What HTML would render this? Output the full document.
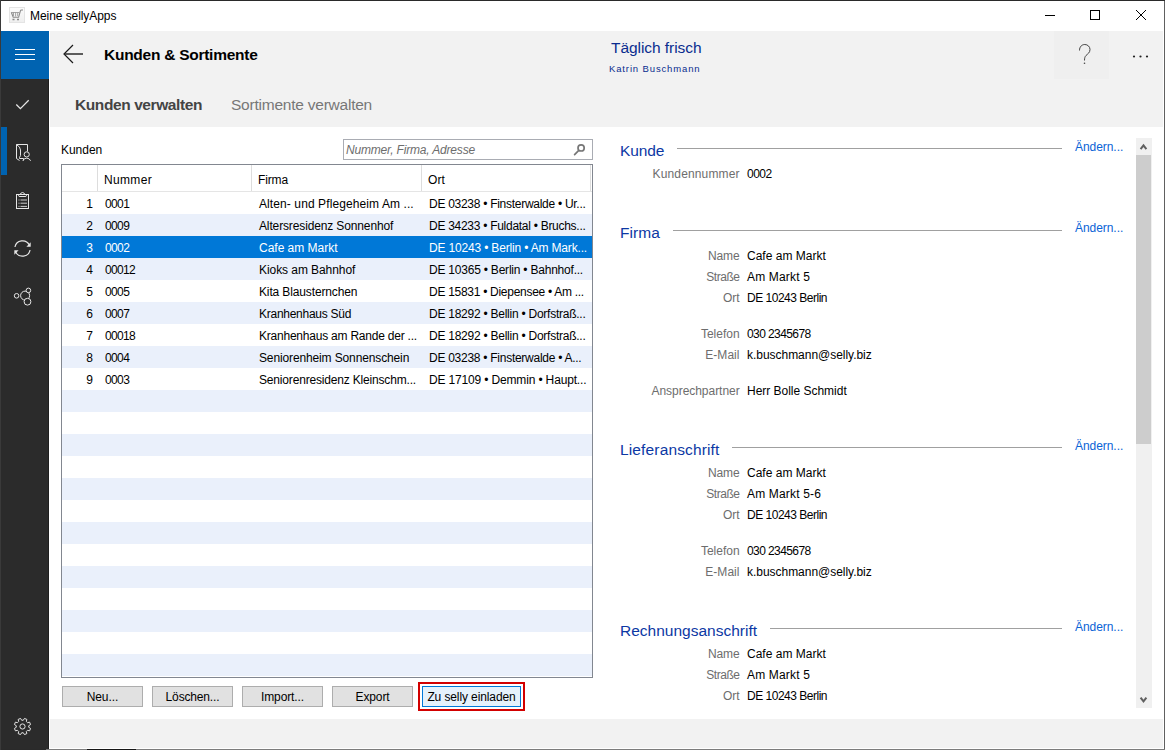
<!DOCTYPE html>
<html><head><meta charset="utf-8">
<style>
*{box-sizing:border-box;margin:0;padding:0}
html,body{width:1165px;height:750px;overflow:hidden;background:#606060}
body{font-family:"Liberation Sans",sans-serif;font-size:12px;color:#000;position:relative}
.a{position:absolute;white-space:nowrap}
.row{position:absolute;left:62px;width:530px;height:22px;background:#fff}
.row.alt{background:#eaf0fb}
.row.sel{background:#0078d7}
.t{position:absolute;line-height:22px;height:22px;white-space:nowrap;padding-top:1px}
.btn{position:absolute;top:686px;width:81px;height:21px;background:#e1e1e1;border:1px solid #adadad;text-align:center;line-height:19px;white-space:nowrap}
.sec{position:absolute;left:620px;font-size:15px;color:#1c4596;line-height:18px;white-space:nowrap}
.ln{position:absolute;height:1px;background:#a0a0a0}
.lnk{position:absolute;left:1075px;color:#1a6fd8;line-height:16px;white-space:nowrap}
.lb{position:absolute;right:425px;color:#6d6d6d;line-height:16px;white-space:nowrap;text-align:right}
.v{position:absolute;left:747px;line-height:16px;white-space:nowrap}

</style></head><body>
<!-- window bg -->
<div class="a" style="left:0;top:749px;width:1165px;height:1px;background:#7c7c7c"></div>
<div class="a" style="left:0;top:749px;width:46px;height:1px;background:#2a2a2a"></div>
<div class="a" style="left:87px;top:749px;width:49px;height:1px;background:#151515"></div>

<div class="a" style="left:0;top:0;width:1165px;height:1px;background:#2a2a2a"></div>
<div class="a" style="left:0;top:0;width:1px;height:750px;background:#3a3a3a"></div>
<div class="a" style="left:1px;top:1px;width:1163px;height:748px;background:#fff"></div>
<!-- title bar -->
<div class="a" style="left:9px;top:7px;width:16px;height:16px;border:1px solid #e4e4e4;background:linear-gradient(#fbfbfb,#efefef)"></div>
<svg class="a" style="left:0;top:0" width="30" height="30">
  <path d="M11.3 12.2L13.2 17.3H18.6L20.4 10.8Q20.6 10 21.5 10H23" fill="none" stroke="#8a8a8a" stroke-width="1.1"/>
  <path d="M13.5 12.2V16M15.6 12.2V16.5M17.7 12.2V16M11.3 12.5H19.5" fill="none" stroke="#9a9a9a" stroke-width="0.9"/>
  <path d="M12.5 19.5H14.5M17 19.5H19" stroke="#888" stroke-width="1.3"/>
</svg>
<svg class="a" style="left:0;top:0" width="1165" height="31">
  <path d="M1045 15.5H1055" stroke="#000" stroke-width="1"/>
  <rect x="1090.5" y="10.5" width="9" height="9" fill="none" stroke="#000" stroke-width="1"/>
  <path d="M1136 10L1146 20M1146 10L1136 20" stroke="#000" stroke-width="1"/>
</svg>
<!-- sidebar -->
<div class="a" style="left:1px;top:31px;width:48px;height:718px;background:#2b2b2b"></div>
<div class="a" style="left:48px;top:79px;width:1px;height:670px;background:#1f1f1f"></div>
<div class="a" style="left:1px;top:31px;width:48px;height:48px;background:#0063b1"></div>
<div class="a" style="left:15px;top:49px;width:20px;height:1px;background:#fff"></div>
<div class="a" style="left:15px;top:54px;width:20px;height:1px;background:#fff"></div>
<div class="a" style="left:15px;top:59px;width:20px;height:1px;background:#fff"></div>
<div class="a" style="left:1px;top:127px;width:6px;height:48px;background:#0063b1"></div>
<svg class="a" style="left:0;top:0" width="49" height="750">
  <g fill="none" stroke="#e6e6e6" stroke-width="1">
    <path d="M16.3 104.5L20.4 108.6L28.7 100.3" stroke-width="1.3"/>
    <path d="M16.5 144.5H27.5V151.5M16.5 144.5V158.5L19.5 160.5M16.5 144.5Q20.5 147 20.5 150V155.5L19.5 157.5V158.5H23.5V160.5"/>
    <circle cx="26.7" cy="154.4" r="2.6"/>
    <path d="M22.8 160.8A4.2 4.2 0 0 1 30.6 160.8"/>
    <rect x="16.5" y="194.5" width="12" height="14"/>
    <path d="M20 194.5Q21 192.5 22.5 192.5Q24 192.5 25 194.5M18.5 194.5V195.5Q18.5 196.5 20 196.5H25Q26.5 196.5 26.5 195.5V194.5"/>
    <path d="M18.5 200H19.5M20.5 200H27M18.5 203.2H19.5M20.5 203.2H27M18.5 206.4H19.5M20.5 206.4H27" stroke="#cfcfcf"/>
    <path d="M14.95 247A7.7 7.7 0 0 1 29.36 245" stroke-width="1.2"/>
    <path d="M30.05 250A7.7 7.7 0 0 1 15.64 252" stroke-width="1.2"/>
    <circle cx="16.6" cy="295.8" r="2.3"/>
    <circle cx="25.1" cy="295.6" r="4.5"/>
    <circle cx="28.4" cy="290.4" r="2.3" fill="#2b2b2b"/>
    <circle cx="27.5" cy="301.7" r="3.4" fill="#2b2b2b"/>
    <path d="M23.32 720.25 L24.44 718.43 L26.84 719.42 L26.34 721.50 L27.50 722.66 L29.58 722.16 L30.57 724.56 L28.75 725.68 L28.75 727.32 L30.57 728.44 L29.58 730.84 L27.50 730.34 L26.34 731.50 L26.84 733.58 L24.44 734.57 L23.32 732.75 L21.68 732.75 L20.56 734.57 L18.16 733.58 L18.66 731.50 L17.50 730.34 L15.42 730.84 L14.43 728.44 L16.25 727.32 L16.25 725.68 L14.43 724.56 L15.42 722.16 L17.50 722.66 L18.66 721.50 L18.16 719.42 L20.56 718.43 L21.68 720.25Z"/>
    <circle cx="22.5" cy="726.5" r="2.6"/>
  </g>
  <path d="M30.7 242.3V246.7H26.4Z" fill="#e6e6e6"/>
  <path d="M14.3 250.3H18.6L14.3 254.7Z" fill="#e6e6e6"/>
</svg>
<!-- header -->
<div class="a" style="left:50px;top:31px;width:1113px;height:96px;background:#f2f2f2"></div>
<div class="a" style="left:1054px;top:31px;width:55px;height:48px;background:#efefef"></div>
<svg class="a" style="left:0;top:0" width="1165" height="127">
  <path d="M73 45L64 54L73 63" fill="none" stroke="#1a1a1a" stroke-width="1.2"/>
  <path d="M64.5 54H83" fill="none" stroke="#2a2a2a" stroke-width="1.5"/>
  <path d="M1079.5 50.5C1079.5 46.5 1082 44.5 1084.8 44.5C1087.8 44.5 1090 46.8 1090 49.5C1090 52.8 1087.5 54 1086 55.5C1085 56.5 1084.5 58 1084.5 60.5" fill="none" stroke="#444" stroke-width="1"/>
  <circle cx="1084.5" cy="63.3" r="0.8" fill="#444"/>
  <circle cx="1134" cy="56.5" r="1.1" fill="#222"/>
  <circle cx="1140.5" cy="56.5" r="1.1" fill="#222"/>
  <circle cx="1147" cy="56.5" r="1.1" fill="#222"/>
</svg>
<!-- left panel -->
<div class="a" style="left:343px;top:139px;width:250px;height:21px;border:1px solid #a9acb3;background:#fff"></div>
<svg class="a" style="left:0;top:0" width="600" height="170">
  <circle cx="581.1" cy="147.9" r="3.1" fill="none" stroke="#777" stroke-width="1.7"/>
  <path d="M578.3 150.8L574.6 154.6" stroke="#777" stroke-width="1.7" stroke-linecap="round"/>
</svg>
<!-- table -->
<div class="a" style="left:61px;top:164px;width:532px;height:514px;border:1px solid #828790;background:#fff"></div>
<div class="a" style="left:97px;top:165px;width:1px;height:26px;background:#dddddd"></div>
<div class="a" style="left:251px;top:165px;width:1px;height:26px;background:#dddddd"></div>
<div class="a" style="left:421px;top:165px;width:1px;height:26px;background:#dddddd"></div>
<div class="a" style="left:590px;top:165px;width:1px;height:26px;background:#dddddd"></div>
<div class="a" style="left:62px;top:191px;width:530px;height:1px;background:#e5e5e5"></div>
<div class="row" style="top:192px;height:22px"></div>
<div class="row alt" style="top:214px;height:22px"></div>
<div class="row sel" style="top:236px;height:22px"></div>
<div class="row alt" style="top:258px;height:22px"></div>
<div class="row" style="top:280px;height:22px"></div>
<div class="row alt" style="top:302px;height:22px"></div>
<div class="row" style="top:324px;height:22px"></div>
<div class="row alt" style="top:346px;height:22px"></div>
<div class="row" style="top:368px;height:22px"></div>
<div class="row alt" style="top:390px;height:22px"></div>
<div class="row" style="top:412px;height:22px"></div>
<div class="row alt" style="top:434px;height:22px"></div>
<div class="row" style="top:456px;height:22px"></div>
<div class="row alt" style="top:478px;height:22px"></div>
<div class="row" style="top:500px;height:22px"></div>
<div class="row alt" style="top:522px;height:22px"></div>
<div class="row" style="top:544px;height:22px"></div>
<div class="row alt" style="top:566px;height:22px"></div>
<div class="row" style="top:588px;height:22px"></div>
<div class="row alt" style="top:610px;height:22px"></div>
<div class="row" style="top:632px;height:22px"></div>
<div class="row alt" style="top:654px;height:22px"></div>
<div class="ln" style="left:677px;top:148px;width:385px"></div>
<div class="ln" style="left:673px;top:230px;width:389px"></div>
<div class="ln" style="left:732px;top:447px;width:330px"></div>
<div class="ln" style="left:770px;top:628px;width:292px"></div>
<!-- buttons -->
<div class="btn" style="left:62px"></div>
<div class="btn" style="left:152px"></div>
<div class="btn" style="left:242px"></div>
<div class="btn" style="left:332px"></div>
<div class="a" style="left:418px;top:682px;width:107px;height:29px;border:2px solid #d20000"></div>
<div class="btn" style="left:422px;width:99px;background:#e5f1fb;border-color:#0078d7"></div>
<!-- bottom band -->
<div class="a" style="left:50px;top:719px;width:1113px;height:29px;background:#f2f2f2"></div>
<!-- right panel -->

<!-- scrollbar -->
<div class="a" style="left:1136px;top:138px;width:16px;height:570px;background:#f0f0f0"></div>
<div class="a" style="left:1136px;top:155px;width:15px;height:289px;background:#cdcdcd"></div>
<svg class="a" style="left:0;top:0" width="1165" height="750">
  <path d="M1140.6 149.2L1143.5 145.4L1146.4 149.2" fill="none" stroke="#606060" stroke-width="2"/>
  <path d="M1140.6 697.6L1143.5 701.4L1146.4 697.6" fill="none" stroke="#606060" stroke-width="2"/>
</svg>

<div class="a" style="left:30.00px;top:8px;line-height:16px;letter-spacing:-0.065px">Meine sellyApps</div>
<div class="a" style="left:104.00px;top:45px;line-height:19px;font-size:15.5px;font-weight:700;letter-spacing:-0.261px">Kunden &amp; Sortimente</div>
<div class="a" style="left:611.00px;top:38px;line-height:19px;font-size:15.5px;color:#0a2d8f;letter-spacing:-0.058px">Täglich frisch</div>
<div class="a" style="left:609.00px;top:62px;line-height:13px;font-size:9.5px;color:#0a2d8f;letter-spacing:0.867px">Katrin Buschmann</div>
<div class="a" style="left:75.00px;top:95px;line-height:19px;font-size:15.5px;font-weight:700;color:#444;letter-spacing:-0.406px">Kunden verwalten</div>
<div class="a" style="left:231.00px;top:95px;line-height:19px;font-size:15.5px;color:#777;letter-spacing:-0.230px">Sortimente verwalten</div>
<div class="a" style="left:61.00px;top:142px;line-height:16px;letter-spacing:-0.029px">Kunden</div>
<div class="a" style="left:346.00px;top:142px;line-height:16px;color:#6d6d6d;letter-spacing:-0.178px;font-style:italic">Nummer, Firma, Adresse</div>
<div class="a" style="left:104.00px;top:172px;line-height:16px;letter-spacing:0.331px">Nummer</div>
<div class="a" style="left:258.00px;top:172px;line-height:16px;letter-spacing:-0.134px">Firma</div>
<div class="a" style="left:428.00px;top:172px;line-height:16px;letter-spacing:0.109px">Ort</div>
<div class="a" style="left:86.31px;top:196px;line-height:16px">1</div>
<div class="a" style="left:105.00px;top:196px;line-height:16px;letter-spacing:-0.626px">0001</div>
<div class="a" style="left:259.00px;top:196px;line-height:16px;letter-spacing:0.097px">Alten- und Pflegeheim Am ...</div>
<div class="a" style="left:429.00px;top:196px;line-height:16px;letter-spacing:-0.279px">DE 03238 • Finsterwalde • Ur...</div>
<div class="a" style="left:86.31px;top:218px;line-height:16px">2</div>
<div class="a" style="left:105.00px;top:218px;line-height:16px;letter-spacing:-0.626px">0009</div>
<div class="a" style="left:259.00px;top:218px;line-height:16px;letter-spacing:-0.134px">Altersresidenz Sonnenhof</div>
<div class="a" style="left:429.00px;top:218px;line-height:16px;letter-spacing:-0.279px">DE 34233 • Fuldatal • Bruchs...</div>
<div class="a" style="left:86.31px;top:240px;line-height:16px;color:#fff">3</div>
<div class="a" style="left:105.00px;top:240px;line-height:16px;color:#fff;letter-spacing:-0.626px">0002</div>
<div class="a" style="left:259.00px;top:240px;line-height:16px;color:#fff;letter-spacing:-0.014px">Cafe am Markt</div>
<div class="a" style="left:429.00px;top:240px;line-height:16px;color:#fff;letter-spacing:-0.171px">DE 10243 • Berlin • Am Mark...</div>
<div class="a" style="left:86.31px;top:262px;line-height:16px">4</div>
<div class="a" style="left:105.00px;top:262px;line-height:16px;letter-spacing:-0.655px">00012</div>
<div class="a" style="left:259.00px;top:262px;line-height:16px;letter-spacing:-0.068px">Kioks am Bahnhof</div>
<div class="a" style="left:429.00px;top:262px;line-height:16px;letter-spacing:-0.217px">DE 10365 • Berlin • Bahnhof...</div>
<div class="a" style="left:86.31px;top:284px;line-height:16px">5</div>
<div class="a" style="left:105.00px;top:284px;line-height:16px;letter-spacing:-0.626px">0005</div>
<div class="a" style="left:259.00px;top:284px;line-height:16px;letter-spacing:-0.135px">Kita Blausternchen</div>
<div class="a" style="left:429.00px;top:284px;line-height:16px;letter-spacing:-0.285px">DE 15831 • Diepensee • Am ...</div>
<div class="a" style="left:86.31px;top:306px;line-height:16px">6</div>
<div class="a" style="left:105.00px;top:306px;line-height:16px;letter-spacing:-0.626px">0007</div>
<div class="a" style="left:259.00px;top:306px;line-height:16px;letter-spacing:-0.265px">Kranhenhaus Süd</div>
<div class="a" style="left:429.00px;top:306px;line-height:16px;letter-spacing:-0.249px">DE 18292 • Bellin • Dorfstraß...</div>
<div class="a" style="left:86.31px;top:328px;line-height:16px">7</div>
<div class="a" style="left:105.00px;top:328px;line-height:16px;letter-spacing:-0.655px">00018</div>
<div class="a" style="left:259.00px;top:328px;line-height:16px;letter-spacing:-0.222px">Kranhenhaus am Rande der ...</div>
<div class="a" style="left:429.00px;top:328px;line-height:16px;letter-spacing:-0.249px">DE 18292 • Bellin • Dorfstraß...</div>
<div class="a" style="left:86.31px;top:350px;line-height:16px">8</div>
<div class="a" style="left:105.00px;top:350px;line-height:16px;letter-spacing:-0.626px">0004</div>
<div class="a" style="left:259.00px;top:350px;line-height:16px;letter-spacing:-0.130px">Seniorenheim Sonnenschein</div>
<div class="a" style="left:429.00px;top:350px;line-height:16px;letter-spacing:-0.269px">DE 03238 • Finsterwalde • A...</div>
<div class="a" style="left:86.31px;top:372px;line-height:16px">9</div>
<div class="a" style="left:105.00px;top:372px;line-height:16px;letter-spacing:-0.626px">0003</div>
<div class="a" style="left:259.00px;top:372px;line-height:16px;letter-spacing:-0.176px">Seniorenresidenz Kleinschm...</div>
<div class="a" style="left:429.00px;top:372px;line-height:16px;letter-spacing:-0.158px">DE 17109 • Demmin • Haupt...</div>
<div class="a" style="left:86.65px;top:689px;line-height:16px;letter-spacing:-0.053px">Neu...</div>
<div class="a" style="left:165.60px;top:689px;line-height:16px;letter-spacing:-0.158px">Löschen...</div>
<div class="a" style="left:261.00px;top:689px;line-height:16px;letter-spacing:-0.113px">Import...</div>
<div class="a" style="left:355.50px;top:689px;line-height:16px;letter-spacing:-0.115px">Export</div>
<div class="a" style="left:427.40px;top:689px;line-height:16px;letter-spacing:-0.110px">Zu selly einladen</div>
<div class="a" style="left:620.00px;top:141px;line-height:19px;font-size:15.5px;color:#0c38a4;letter-spacing:-0.106px">Kunde</div>
<div class="a" style="left:1075.00px;top:139px;line-height:16px;color:#0a63d6;letter-spacing:-0.056px">Ändern...</div>
<div class="a" style="left:652.60px;top:166px;line-height:16px;color:#6d6d6d;letter-spacing:0.134px">Kundennummer</div>
<div class="a" style="left:747.00px;top:166px;line-height:16px;letter-spacing:-0.501px">0002</div>
<div class="a" style="left:620.00px;top:223px;line-height:19px;font-size:15.5px;color:#0c38a4;letter-spacing:0.078px">Firma</div>
<div class="a" style="left:1075.00px;top:220px;line-height:16px;color:#0a63d6;letter-spacing:-0.056px">Ändern...</div>
<div class="a" style="left:707.90px;top:248px;line-height:16px;color:#6d6d6d;letter-spacing:-0.079px">Name</div>
<div class="a" style="left:747.00px;top:248px;line-height:16px;letter-spacing:0.009px">Cafe am Markt</div>
<div class="a" style="left:706.20px;top:269px;line-height:16px;color:#6d6d6d;letter-spacing:-0.436px">Straße</div>
<div class="a" style="left:747.00px;top:269px;line-height:16px;letter-spacing:0.166px">Am Markt 5</div>
<div class="a" style="left:723.00px;top:290px;line-height:16px;color:#6d6d6d;letter-spacing:-0.024px">Ort</div>
<div class="a" style="left:747.00px;top:290px;line-height:16px;letter-spacing:-0.493px">DE 10243 Berlin</div>
<div class="a" style="left:700.90px;top:326px;line-height:16px;color:#6d6d6d">Telefon</div>
<div class="a" style="left:747.00px;top:326px;line-height:16px;letter-spacing:-0.589px">030 2345678</div>
<div class="a" style="left:705.20px;top:347px;line-height:16px;color:#6d6d6d;letter-spacing:0.064px">E-Mail</div>
<div class="a" style="left:747.00px;top:347px;line-height:16px;letter-spacing:-0.031px">k.buschmann@selly.biz</div>
<div class="a" style="left:651.50px;top:383px;line-height:16px;color:#6d6d6d;letter-spacing:-0.041px">Ansprechpartner</div>
<div class="a" style="left:747.00px;top:383px;line-height:16px;letter-spacing:-0.018px">Herr Bolle Schmidt</div>
<div class="a" style="left:620.00px;top:440px;line-height:19px;font-size:15.5px;color:#0c38a4;letter-spacing:0.143px">Lieferanschrift</div>
<div class="a" style="left:1075.00px;top:438px;line-height:16px;color:#0a63d6;letter-spacing:-0.056px">Ändern...</div>
<div class="a" style="left:707.90px;top:465px;line-height:16px;color:#6d6d6d;letter-spacing:-0.079px">Name</div>
<div class="a" style="left:747.00px;top:465px;line-height:16px;letter-spacing:0.009px">Cafe am Markt</div>
<div class="a" style="left:706.20px;top:486px;line-height:16px;color:#6d6d6d;letter-spacing:-0.436px">Straße</div>
<div class="a" style="left:747.00px;top:486px;line-height:16px;letter-spacing:0.165px">Am Markt 5-6</div>
<div class="a" style="left:723.00px;top:507px;line-height:16px;color:#6d6d6d;letter-spacing:-0.024px">Ort</div>
<div class="a" style="left:747.00px;top:507px;line-height:16px;letter-spacing:-0.493px">DE 10243 Berlin</div>
<div class="a" style="left:700.90px;top:543px;line-height:16px;color:#6d6d6d">Telefon</div>
<div class="a" style="left:747.00px;top:543px;line-height:16px;letter-spacing:-0.589px">030 2345678</div>
<div class="a" style="left:705.20px;top:564px;line-height:16px;color:#6d6d6d;letter-spacing:0.064px">E-Mail</div>
<div class="a" style="left:747.00px;top:564px;line-height:16px;letter-spacing:-0.031px">k.buschmann@selly.biz</div>
<div class="a" style="left:620.00px;top:621px;line-height:19px;font-size:15.5px;color:#0c38a4">Rechnungsanschrift</div>
<div class="a" style="left:1075.00px;top:619px;line-height:16px;color:#0a63d6;letter-spacing:-0.056px">Ändern...</div>
<div class="a" style="left:707.90px;top:646px;line-height:16px;color:#6d6d6d;letter-spacing:-0.079px">Name</div>
<div class="a" style="left:747.00px;top:646px;line-height:16px;letter-spacing:0.009px">Cafe am Markt</div>
<div class="a" style="left:706.20px;top:667px;line-height:16px;color:#6d6d6d;letter-spacing:-0.436px">Straße</div>
<div class="a" style="left:747.00px;top:667px;line-height:16px;letter-spacing:0.166px">Am Markt 5</div>
<div class="a" style="left:723.00px;top:688px;line-height:16px;color:#6d6d6d;letter-spacing:-0.024px">Ort</div>
<div class="a" style="left:747.00px;top:688px;line-height:16px;letter-spacing:-0.493px">DE 10243 Berlin</div>

</body></html>
